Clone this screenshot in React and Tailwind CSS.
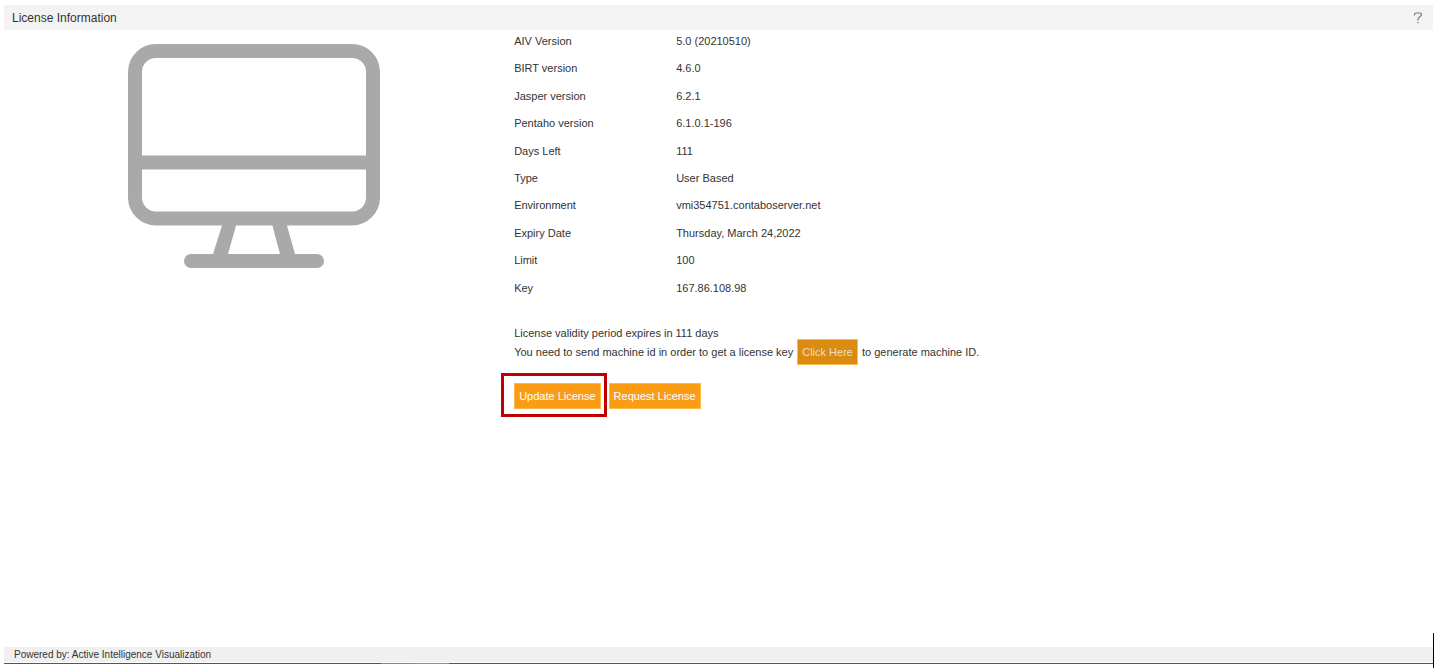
const details = [
  { label: "AIV Version", value: "5.0 (20210510)" },
  { label: "BIRT version", value: "4.6.0" },
  { label: "Jasper version", value: "6.2.1" },
  { label: "Pentaho version", value: "6.1.0.1-196" },
  { label: "Days Left", value: "111" },
  { label: "Type", value: "User Based" },
  { label: "Environment", value: "vmi354751.contaboserver.net" },
  { label: "Expiry Date", value: "Thursday, March 24,2022" },
  { label: "Limit", value: "100" },
  { label: "Key", value: "167.86.108.98" }
];

const MonitorIcon = () => (
  <svg
    className="h-[224px] w-[252px] shrink-0 text-[#a9a9a9]"
    viewBox="0 0 252 224"
    fill="none"
    stroke="currentColor"
    strokeWidth="14"
    aria-hidden="true"
  >
    <rect x="7" y="7" width="238" height="167.5" rx="21" />
    <path d="M7 118.5H245" />
    <path d="M94.5 180 108.5 180 100 210 85 210ZM144 180 158.5 180 167 210 152 210Z" fill="currentColor" stroke="none" />
    <path d="M63 217H189" strokeLinecap="round" />
  </svg>
);

const ActionButton = ({ active, children }) => (
  <button
    type="button"
    className={`h-[26px] border border-[#ffb949] px-1 text-[11px] leading-4 ${
      active ? "bg-[#db8b0f] text-[#eadfcd]" : "bg-[#fa9d14] text-white"
    }`}
  >
    {children}
  </button>
);

const LicenseDetails = () => (
  <table className="h-[274px] text-left align-top text-[11px] leading-[22px]">
    <tbody>
      {details.map(({ label, value }) => (
        <tr key={label}>
          <th scope="row" className="w-[162px] p-0 align-top font-normal">
            {label}
          </th>
          <td className="p-0 align-top">{value}</td>
        </tr>
      ))}
    </tbody>
  </table>
);

const App = () => (
  <div className="relative flex min-h-screen flex-col bg-white px-1 pt-[5px] pb-1 font-['Liberation_Sans',Arial,sans-serif] text-[#333]">
    <header className="flex h-[25px] items-center justify-between bg-[#f3f3f3] pr-[10px] pl-2">
      <h1 className="text-xs">License Information</h1>
      <button type="button" aria-label="Help" className="text-[#777]">
        <svg className="h-3 w-[10px]" viewBox="0 0 10 12" fill="none" stroke="currentColor" strokeWidth="1.2" aria-hidden="true">
          <path d="M1.5 3.5V2.5C1.5 1.5 2 1 3 1H7C8 1 8.5 1.5 8.5 2.5C8.5 4.5 5 5.2 5 7.5V8.5M5 10V11.3" />
        </svg>
      </button>
    </header>

    <main className="flex flex-1">
      <div className="flex w-[35%] justify-center pt-[14px]">
        <MonitorIcon />
      </div>
      <section className="flex-1 pl-[10px]">
        <LicenseDetails />
        <div className="pt-[23px] text-[11px]">
          <p className="leading-3">License validity period expires in 111 days</p>
          <p className="flex items-center gap-1">
            <span>You need to send machine id in order to get a license key</span>
            <ActionButton active>Click Here</ActionButton>
            <span>to generate machine ID.</span>
          </p>
        </div>
        <div className="flex gap-2 pt-[18px]">
          <div className="relative">
            <ActionButton>Update License</ActionButton>
            <span className="pointer-events-none absolute -top-[10px] -right-[6px] -bottom-2 -left-[13px] border-3 border-[#c00000]" />
          </div>
          <ActionButton>Request License</ActionButton>
        </div>
      </section>
    </main>

    <footer>
      <p className="mb-px bg-[#f0f0f0] pl-[10px] text-[10px] leading-[15px]">
        Powered by: Active Intelligence Visualization
      </p>
      <div className="flex h-px bg-[#555]">
        <span className="ml-[377px] w-[34px] bg-[#888]" />
        <span className="w-[34px] bg-[#c08560]" />
      </div>
    </footer>
    <span className="absolute right-[3px] bottom-0 h-[35px] w-px bg-black" />
  </div>
);

export default App;
